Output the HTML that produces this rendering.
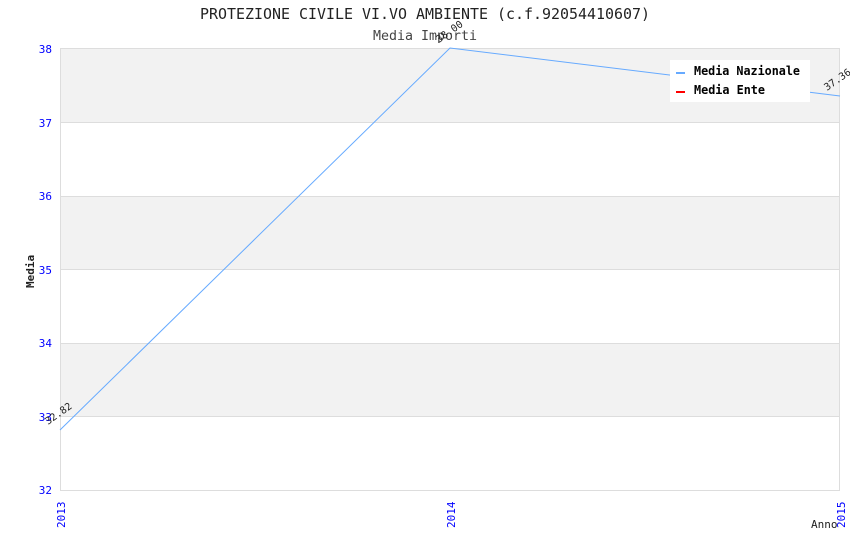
<!DOCTYPE html><html><head><style>body{margin:0;background:#fff;width:850px;height:550px;overflow:hidden}</style></head><body>
<svg width="850" height="550" xmlns="http://www.w3.org/2000/svg" font-family="'DejaVu Sans Mono','Liberation Mono',monospace">
<rect x="60" y="48" width="780" height="74" fill="#f2f2f2"/>
<rect x="60" y="196" width="780" height="73" fill="#f2f2f2"/>
<rect x="60" y="343" width="780" height="73" fill="#f2f2f2"/>
<g stroke="#dddddd" stroke-width="1">
<line x1="60" y1="48.5" x2="840" y2="48.5"/><line x1="60" y1="122.5" x2="840" y2="122.5"/>
<line x1="60" y1="196.5" x2="840" y2="196.5"/><line x1="60" y1="269.5" x2="840" y2="269.5"/>
<line x1="60" y1="343.5" x2="840" y2="343.5"/><line x1="60" y1="416.5" x2="840" y2="416.5"/>
<line x1="60" y1="490.5" x2="840" y2="490.5"/><line x1="60.5" y1="48" x2="60.5" y2="490"/><line x1="839.5" y1="48" x2="839.5" y2="490"/>
</g>
<polyline points="60,430 450,48 840,96" fill="none" stroke="#66aaff" stroke-width="1"/>
<text x="425" y="19" text-anchor="middle" font-size="15" fill="#222" textLength="450" lengthAdjust="spacingAndGlyphs">PROTEZIONE CIVILE VI.VO AMBIENTE (c.f.92054410607)</text>
<text x="425" y="40" text-anchor="middle" font-size="13" fill="#444" textLength="104" lengthAdjust="spacingAndGlyphs">Media Importi</text>
<g font-size="11" fill="#0000ff" text-anchor="end">
<text x="52" y="53">38</text><text x="52" y="127">37</text><text x="52" y="200">36</text><text x="52" y="274">35</text><text x="52" y="347">34</text><text x="52" y="421">33</text><text x="52" y="494">32</text>
</g>
<g font-size="11" fill="#0000ff">
<text transform="translate(65,528) rotate(-90)">2013</text>
<text transform="translate(455,528) rotate(-90)">2014</text>
<text transform="translate(845,528) rotate(-90)">2015</text>
</g>
<text x="811" y="528" font-size="11" fill="#222">Anno</text>
<text transform="translate(34,288) rotate(-90)" font-size="11" fill="#222" font-weight="bold">Media</text>
<g font-size="10" fill="#222">
<text transform="translate(48,425) rotate(-35)">32.82</text>
<text transform="translate(439,43) rotate(-35)">38.00</text>
<text transform="translate(827,91) rotate(-35)">37.36</text>
</g>
<rect x="670" y="60" width="140" height="42" fill="#fff"/>
<rect x="676" y="72" width="9" height="2" fill="#66aaff"/>
<rect x="676" y="91" width="9" height="2" fill="#ff0000"/>
<g font-size="12" font-weight="bold" fill="#000"><text x="694" y="75" textLength="106" lengthAdjust="spacingAndGlyphs">Media Nazionale</text><text x="694" y="94" textLength="71" lengthAdjust="spacingAndGlyphs">Media Ente</text></g>
</svg></body></html>
